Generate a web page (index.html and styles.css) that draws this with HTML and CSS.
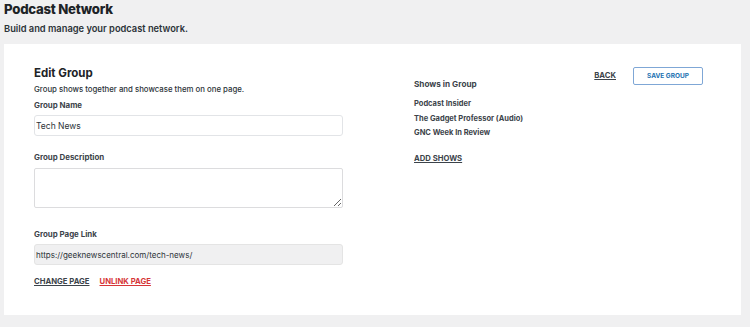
FILE: index.html
```html
<!DOCTYPE html>
<html>
<head>
<meta charset="utf-8">
<link rel="stylesheet" href="styles.css">
</head>
<body>
<header class="page-head">
  <h1 class="page-title">Podcast Network</h1>
  <p class="page-sub">Build and manage your podcast network.</p>
</header>
<main class="card">
  <section class="col-left">
    <h2 class="edit-title">Edit Group</h2>
    <p class="edit-desc">Group shows together and showcase them on one page.</p>
    <label class="field-label">Group Name</label>
    <input class="field-input" type="text" value="Tech News">
    <label class="field-label label-desc">Group Description</label>
    <textarea class="field-textarea"></textarea>
    <label class="field-label label-link">Group Page Link</label>
    <input class="field-input field-readonly" type="text" value="https://geeknewscentral.com/tech-news/" readonly>
    <div class="link-row">
      <a class="text-link">CHANGE PAGE</a>
      <a class="text-link link-red">UNLINK PAGE</a>
    </div>
  </section>
  <section class="col-right">
    <div class="shows">
      <h3 class="shows-title">Shows in Group</h3>
      <ul class="shows-list">
        <li>Podcast Insider</li>
        <li>The Gadget Professor (Audio)</li>
        <li>GNC Week In Review</li>
      </ul>
      <a class="text-link add-shows">ADD SHOWS</a>
    </div>
    <div class="actions">
      <a class="text-link back-link">BACK</a>
      <button class="save-btn">SAVE GROUP</button>
    </div>
  </section>
</main>
</body>
</html>
```
FILE: styles.css
```css
html, body {
  margin: 0;
  padding: 0;
  background: #f0f0f1;
  font-family: Inter, "Noto Sans", sans-serif;
  color: #1d2327;
}
body {
  padding: 0 9px 0 4px;
}
.page-head {
  padding-top: 1px;
}
.page-title {
  margin: 0;
  font-size: 13.2px;
  font-weight: 800;
  line-height: 17px;
  letter-spacing: -0.25px;
  color: #1d2327;
}
.page-sub {
  margin: 4px 0 0;
  font-size: 9.3px;
  font-weight: 600;
  line-height: 13px;
  color: #2c3338;
}
.card {
  margin-top: 9px;
  background: #fff;
  height: 271px;
  box-sizing: border-box;
  padding: 21px 38px 0 30px;
  display: flex;
  gap: 71px;
}
.col-left {
  width: 309px;
  display: flex;
  flex-direction: column;
}
.edit-title {
  margin: 0;
  font-size: 11.5px;
  font-weight: 700;
  line-height: 16px;
  color: #1d2327;
}
.edit-desc {
  margin: 3px 0 0;
  font-size: 7.8px;
  line-height: 11px;
  font-weight: 500;
  color: #2c3338;
}
.field-label {
  margin-top: 5px;
  font-size: 7.9px;
  font-weight: 700;
  line-height: 11px;
  color: #3c434a;
}
.label-desc { margin-top: 16px; }
.label-link { margin-top: 21px; }
.field-input {
  margin-top: 4px;
  height: 21px;
  box-sizing: border-box;
  border: 1px solid #e2e4e7;
  border-radius: 3px;
  padding: 0 1px;
  font-family: inherit;
  font-size: 8.5px;
  color: #2c3338;
  background: #fff;
  outline: none;
}
.field-readonly {
  background: #f0f0f1;
  border-color: #e4e4e4;
  font-size: 8px;
}
.field-textarea {
  margin-top: 5px;
  height: 40px;
  box-sizing: border-box;
  border: 1px solid #dcdcde;
  border-radius: 2px;
  resize: vertical;
  font-family: inherit;
}
.link-row {
  margin-top: 12px;
  display: flex;
  gap: 10px;
}
.text-link {
  font-size: 7.7px;
  font-weight: 700;
  line-height: 10px;
  color: #3c434a;
  text-decoration: underline;
  text-underline-offset: 1px;
  cursor: pointer;
}
.link-red { color: #d63638; }
.col-right {
  flex: 1;
  display: flex;
  justify-content: space-between;
  align-items: flex-start;
}
.shows {
  padding-top: 14px;
  display: flex;
  flex-direction: column;
  align-items: flex-start;
}
.shows-title {
  margin: 0;
  font-size: 8.2px;
  font-weight: 700;
  line-height: 11px;
  color: #3c434a;
}
.shows-list {
  list-style: none;
  margin: 7px 0 0;
  padding: 0;
}
.shows-list li {
  font-size: 7.5px;
  font-weight: 700;
  line-height: 14.5px;
  color: #3c434a;
}
.add-shows {
  margin-top: 13px;
}
.actions {
  display: flex;
  align-items: center;
  gap: 17px;
  padding-top: 2px;
}
.back-link { margin-left: 3px; }
.save-btn {
  width: 70px;
  height: 18px;
  border: 1px solid #7fa7d6;
  border-radius: 2px;
  background: #fff;
  color: #2271b1;
  font-family: inherit;
  font-size: 6.5px;
  font-weight: 700;
  padding: 0;
  cursor: pointer;
}
```
